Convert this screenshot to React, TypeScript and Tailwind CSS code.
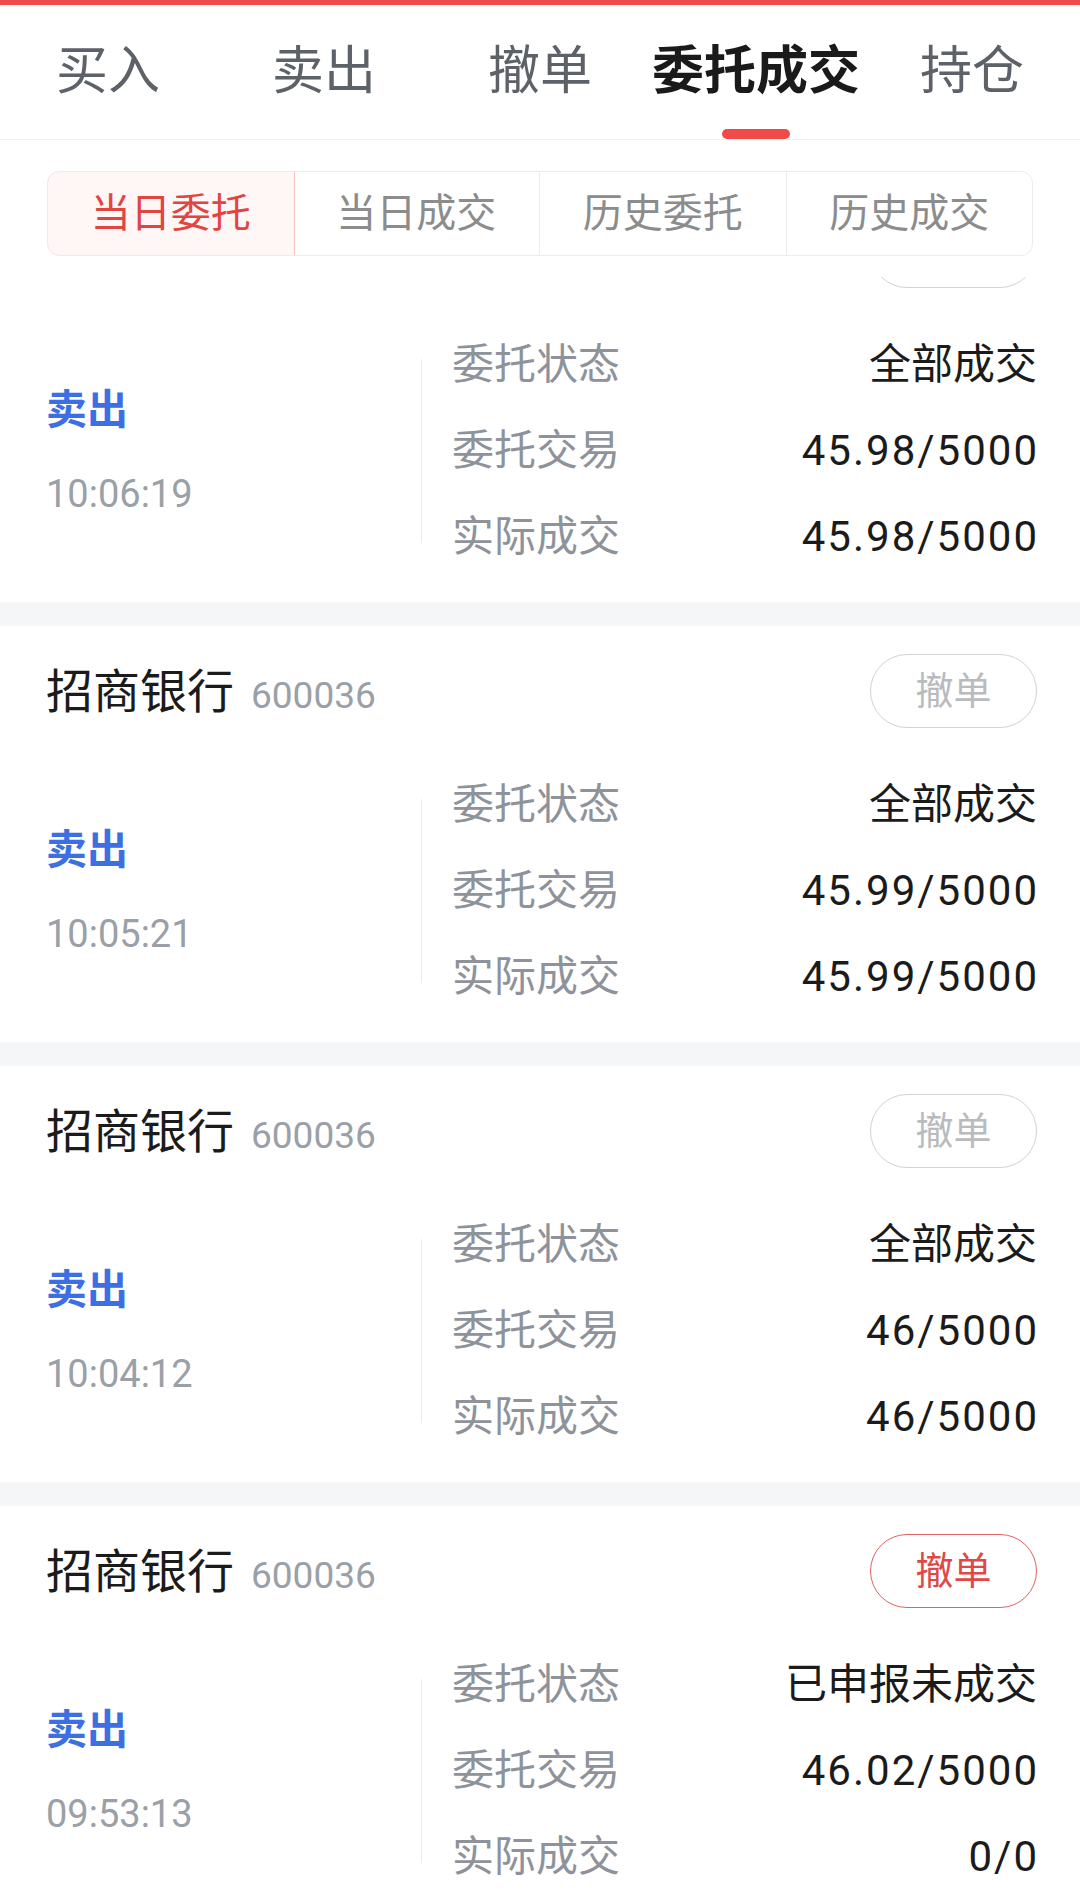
import React from "react";

const FONT = 'Roboto, "Noto Sans CJK SC", "Noto Sans", sans-serif';

type Order = {
  time: string;
  status: string;
  entrust: string;
  actual: string;
  active: boolean;
};

const orders: Order[] = [
  { time: "10:06:19", status: "全部成交", entrust: "45.98/5000", actual: "45.98/5000", active: false },
  { time: "10:05:21", status: "全部成交", entrust: "45.99/5000", actual: "45.99/5000", active: false },
  { time: "10:04:12", status: "全部成交", entrust: "46/5000", actual: "46/5000", active: false },
  { time: "09:53:13", status: "已申报未成交", entrust: "46.02/5000", actual: "0/0", active: true },
];

const tabs = ["买入", "卖出", "撤单", "委托成交", "持仓"];
const segs = ["当日委托", "当日成交", "历史委托", "历史成交"];

function Row({ label, value, numeric }: { label: string; value: string; numeric?: boolean }) {
  return (
    <div className="flex h-[86px] items-center justify-between">
      <span className="text-[42px] leading-none text-[#8e939b]">{label}</span>
      <span
        className={
          "text-[42px] leading-none text-[#1b1b1b] " + (numeric ? "tracking-[2px] mr-[-2px]" : "")
        }
      >
        {value}
      </span>
    </div>
  );
}

function Card({ o, first }: { o: Order; first?: boolean }) {
  return (
    <div className={"bg-white h-[416px] pl-[46px] pr-[43px] pt-[28px] " + (first ? "mt-[-91px]" : "")}>
      <div className="flex h-[74px] items-center justify-between">
        <div className="flex items-baseline">
          <span className="text-[47px] leading-none text-[#1b1b1b]">招商银行</span>
          <span className="ml-[17px] text-[37px] leading-none text-[#9aa0a8]">600036</span>
        </div>
        <div
          className={
            "flex h-[74px] w-[167px] items-center justify-center rounded-full border-[1.5px] text-[38px] leading-none " +
            (o.active ? "border-[#e06363] text-[#e04848]" : "border-[#d2d3d6] text-[#b9bbbf]")
          }
        >
          撤单
        </div>
      </div>
      <div className="mt-[34px] flex h-[258px] items-center">
        <div className="flex w-[375px] flex-col justify-center gap-[44px]">
          <span className="text-[41px] font-bold leading-none text-[#3c6fe4]">卖出</span>
          <span className="text-[38px] leading-none text-[#9aa0a8]">{o.time}</span>
        </div>
        <div className="h-[184px] w-px bg-[#ececec]" />
        <div className="flex flex-1 flex-col pl-[30px]">
          <Row label="委托状态" value={o.status} />
          <Row label="委托交易" value={o.entrust} numeric />
          <Row label="实际成交" value={o.actual} numeric />
        </div>
      </div>
    </div>
  );
}

export default function App() {
  return (
    <div className="h-[1892px] w-[1080px] overflow-hidden bg-white flex flex-col" style={{ fontFamily: FONT }}>
      <div className="h-[5px] bg-[#f04a4a]" />
      <div className="flex h-[135px] border-b border-[#f0f1f3]">
        {tabs.map((t, i) => {
          const active = i === 3;
          return (
            <div key={t} className="relative flex flex-1 justify-center pt-[41px]">
              <span
                className={
                  "text-[52px] leading-none " +
                  (active ? "font-bold text-[#1a1a1a]" : "text-[#5d6168]")
                }
              >
                {t}
              </span>
              {active && (
                <div className="absolute left-1/2 top-[124px] h-[10px] w-[68px] -translate-x-1/2 rounded-full bg-[#f04a4a]" />
              )}
            </div>
          );
        })}
      </div>
      <div className="relative z-10 bg-white px-[47px] pb-[21px] pt-[31px]">
        <div className="flex h-[85px] overflow-hidden rounded-[12px] border border-[#ececee]">
          {segs.map((s, i) => {
            const active = i === 0;
            return (
              <div
                key={s}
                className={
                  "flex flex-1 items-center justify-center text-[40px] leading-none " +
                  (active
                    ? "rounded-l-[12px] border border-[#f3c4c4] bg-[#fff6f6] text-[#e2443f] -m-px"
                    : "border-l border-[#ececee] text-[#8c8c8c]") +
                  (i === 1 ? " border-l-0" : "")
                }
              >
                {s}
              </div>
            );
          })}
        </div>
      </div>
      <div className="flex-1 overflow-hidden bg-[#f5f6f8]">
        <div className="flex flex-col gap-[24px]">
          {orders.map((o, i) => (
            <Card key={i} o={o} first={i === 0} />
          ))}
        </div>
      </div>
    </div>
  );
}
